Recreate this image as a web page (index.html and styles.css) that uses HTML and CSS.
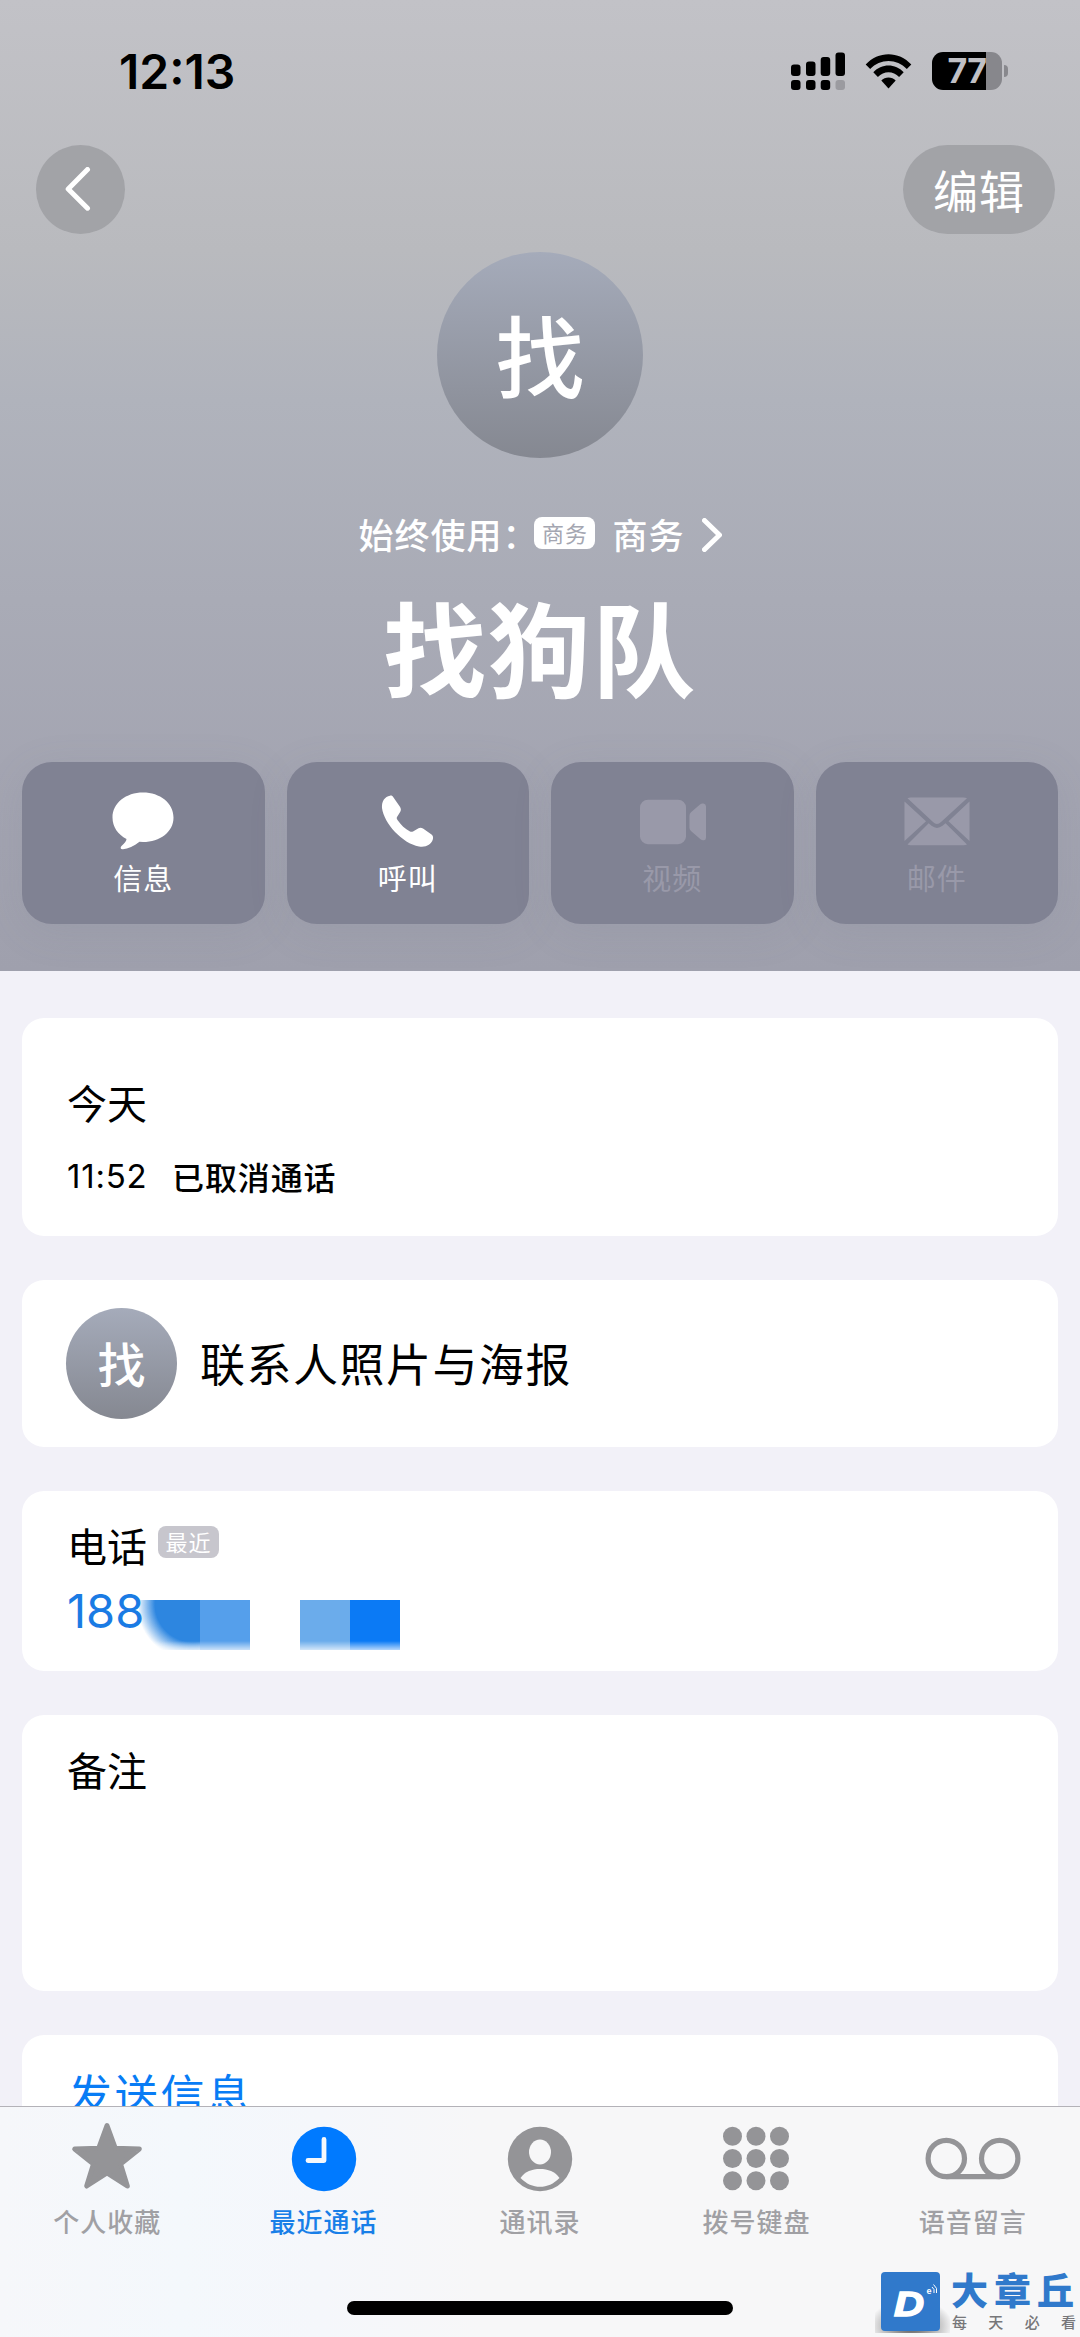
FILE: index.html
```html
<!DOCTYPE html>
<html lang="zh-CN">
<head>
<meta charset="utf-8">
<title>找狗队</title>
<link rel="stylesheet" href="styles.css">
</head>
<body>
<div class="screen">
  <header class="hero">
    <div class="status">
      <span class="clock">12:13</span>
      <div class="indicators">
        <svg class="signal" width="54" height="38" viewBox="0 0 54 38">
          <rect x="0" y="12.5" width="9.5" height="11.5" rx="3"/><rect x="15" y="9.5" width="9.5" height="14.5" rx="3"/><rect x="29.7" y="5" width="9.5" height="19" rx="3"/><rect x="44.5" y="0.5" width="9.5" height="23.5" rx="3"/>
          <rect x="0" y="28" width="9.5" height="10" rx="3"/><rect x="15" y="28" width="9.5" height="10" rx="3"/><rect x="29.7" y="28" width="9.5" height="10" rx="3"/><rect x="44.5" y="28" width="9.5" height="10" rx="3" fill="#9b9ba0"/>
        </svg>
        <svg class="wifi" width="47" height="38" viewBox="0 0 47 38">
          <path d="M0.7 12.5C13 -1.3 34 -1.3 46.3 12.5L41.8 17C32 6.200 15 6.200 5.200 17Z"/>
          <path d="M8.300 20.300C16.500 11.300 30.500 11.300 38.700 20.300L34.100 25C28.300 18.700 18.700 18.700 12.900 25Z"/>
          <path d="M16.300 28.500C20 24.600 27 24.600 30.700 28.500L23.500 36.500Z"/>
        </svg>
        <div class="battery"><span>77</span></div>
        <i class="nub"></i>
      </div>
    </div>
    <nav class="nav">
      <button class="back"><svg width="26" height="46" viewBox="0 0 26 46"><path d="M22.500 2.500L3.200 21.900L22.500 41.200"/></svg></button>
      <button class="edit">编辑</button>
    </nav>
    <div class="avatar">找</div>
    <div class="line">
      <span class="always">始终使用：</span><span class="chip white">商务</span><span class="sim">商务</span>
      <svg width="20" height="34" viewBox="0 0 20 34"><path d="M2.500 2.500L17.500 17L2.500 31.500"/></svg>
    </div>
    <h1>找狗队</h1>
    <div class="actions">
      <button class="tile">
        <svg width="70" height="64" viewBox="0 0 70 64"><path d="M35 4.500C52 4.500 65.500 15 65.500 29.500S52 54 35 54L31.500 53.700C26 58 20 60.600 15 61.200C12.500 61.500 12 59.500 13.500 58C16.500 55 18.500 53 18.500 51C10 46.500 4.500 39 4.500 29.500C4.500 15 18 4.500 35 4.500Z"/></svg>
        <span>信息</span>
      </button>
      <button class="tile">
        <svg width="70" height="64" viewBox="1.500 0 70 64"><path d="M10.500 20C10 13 13.500 8.500 18.500 7.700C20 7.400 21 8 22 9.400L28.600 19C29.700 21 29.600 22.500 28.500 24.300L25.500 29C25 30 25.200 30.700 26 32C29.500 37 33.500 41 38.500 43.500C39.500 44 40.500 44 41.500 43.400L47 40.200C48.500 39.400 50 39.500 51.500 40.600L59.700 46.300C61.500 47.600 62 49.300 61.300 51.600C59.500 57 54.500 59.500 47.500 58.500C31 55.500 12.500 35.500 10.500 20Z"/></svg>
        <span>呼叫</span>
      </button>
      <button class="tile off">
        <svg width="74" height="64" viewBox="0 0 74 64"><rect x="5" y="11.700" width="46" height="44.500" rx="8"/><path d="M54.500 27.500Q54.500 25.500 56 24.200L65 16.400Q66.500 15.200 68.500 15.500Q71 16 71 18.500V49.500Q71 52 69 52.200Q67 52.500 65.500 51.200L56 43Q54.500 41.700 54.500 40Z"/></svg>
        <span>视频</span>
      </button>
      <button class="tile off">
        <svg width="70" height="64" viewBox="0 0 70 64"><path d="M5.500 10.300Q7 9.500 8.500 9.500H61.500Q63.500 9.500 65 10.300L39 34Q35 37.800 31 34ZM2.500 13.500L24 33.200L2.500 53ZM67.500 13.500V53L46.500 33.200ZM26.700 35.200L29.500 37.800Q35 42 40.500 37.800L43.500 35.200L65 56.500Q63.500 57.300 61.500 57.300H8.500Q7 57.300 5.500 56.500Z"/></svg>
        <span>邮件</span>
      </button>
    </div>
  </header>

  <main class="cards">
    <section class="card today">
      <h2>今天</h2>
      <p><time>11:52</time><b>已取消通话</b></p>
    </section>
    <section class="card poster"><div class="avatar small">找</div><span>联系人照片与海报</span></section>
    <section class="card phone">
      <div class="label">电话<span class="chip gray">最近</span></div>
      <div class="number"><span>188</span><div class="mask"><i class="m1"></i><i class="m2"></i><i class="m3"></i><i class="m4"></i></div></div>
    </section>
    <section class="card notes">备注</section>
    <section class="card send">发送信息</section>
  </main>

  <footer class="tabbar">
    <div class="tabs">
      <a class="tab">
        <svg width="96" height="76" viewBox="0 0 96 76"><path d="M48 8.500L56.300 31.300L80.300 32L61.500 47L68.300 69L48 56L27.700 69L34.500 47L15.700 32L39.700 31.300Z" stroke="currentColor" stroke-width="5" stroke-linejoin="round"/></svg>
        <span>个人收藏</span>
      </a>
      <a class="tab on">
        <svg width="96" height="76" viewBox="0 0 96 76"><circle cx="48" cy="42" r="32.200"/><path d="M48 22.500V43.500H32" fill="none" stroke="#f5f8fc" stroke-width="4.800" stroke-linecap="round" stroke-linejoin="round"/></svg>
        <span>最近通话</span>
      </a>
      <a class="tab">
        <svg width="96" height="76" viewBox="0 0 96 76"><circle cx="48" cy="42" r="32.200"/><ellipse cx="48" cy="35" rx="11" ry="12.500" fill="#f7f7f8"/><path d="M28.500 61C33 54.500 40 52 48 52S63 54.500 67.500 61C56 72.800 40 72.800 28.500 61Z" fill="#f7f7f8"/></svg>
        <span>通讯录</span>
      </a>
      <a class="tab">
        <svg width="96" height="76" viewBox="0 0 96 76"><g><circle cx="24.500" cy="19.300" r="9.500"/><circle cx="48" cy="19.300" r="9.500"/><circle cx="71.500" cy="19.300" r="9.500"/><circle cx="24.500" cy="41.500" r="9.500"/><circle cx="48" cy="41.500" r="9.500"/><circle cx="71.500" cy="41.500" r="9.500"/><circle cx="24.500" cy="63.700" r="9.500"/><circle cx="48" cy="63.700" r="9.500"/><circle cx="71.500" cy="63.700" r="9.500"/></g></svg>
        <span>拨号键盘</span>
      </a>
      <a class="tab">
        <svg width="96" height="76" viewBox="0 0 96 76"><g fill="none" stroke="currentColor" stroke-width="5.200"><circle cx="21.300" cy="41.500" r="18.200"/><circle cx="74.700" cy="41.500" r="18.200"/><path d="M21.300 59.700H74.700"/></g></svg>
        <span>语音留言</span>
      </a>
    </div>
    <div class="home"></div>
    <div class="watermark">
      <svg width="75" height="62" viewBox="0 0 75 62">
        <defs><radialGradient id="shade"><stop offset="0" stop-color="#555"/><stop offset="1" stop-color="#555" stop-opacity="0"/></radialGradient></defs>
        <ellipse cx="36" cy="55" rx="42" ry="27" fill="url(#shade)"/>
        <rect x="6" y="1" width="59" height="59" rx="4" fill="#3079cb"/>
        <text x="19" y="45" class="logo-d" textLength="30" lengthAdjust="spacingAndGlyphs">D</text>
        <text x="51.500" y="23" class="logo-e">e</text>
        <path d="M57 16Q60 18 59 22M58.500 13.500Q63 17 61.500 22" fill="none" stroke="#fff" stroke-width="1"/>
      </svg>
      <div class="brand"><strong>大章丘</strong><small><span>每</span><span>天</span><span>必</span><span>看</span></small></div>
    </div>
  </footer>
</div>
</body>
</html>
```
FILE: styles.css
```css
* { box-sizing: border-box; margin: 0; padding: 0; }
body { width: 1080px; height: 2337px; overflow: hidden; font-family: "Noto Sans CJK SC", sans-serif; background: #f2f1f8; color: #000; }
button { border: 0; font: inherit; color: #fff; }
svg { display: block; fill: currentColor; }
.screen { display: flex; flex-direction: column; height: 2337px; }

.hero { height: 971px; flex: none; display: flex; flex-direction: column; align-items: center; color: #fff;
  background: linear-gradient(#c2c2c7 0, #b9babe 250px, #b0b3bc 400px, #a9abb6 600px, #a3a4b1 800px, #9fa0ad 971px); }
.status { width: 100%; height: 145px; padding: 52px 72px 0 119px; display: flex; justify-content: space-between; color: #000; }
.clock { font: 600 48px/40px Inter, sans-serif; letter-spacing: 0; }
.indicators { display: flex; height: 38px; align-items: center; }
.wifi { margin: 0 20px 0 20px; }
.battery { width: 70px; height: 38px; border-radius: 11px; background: linear-gradient(90deg, #000 54px, #87878c 54px); color: #c0c0c5; font: 700 34px/38px Inter, sans-serif; letter-spacing: -.5px; text-align: center; }
.nub { width: 4px; height: 12px; margin-left: 2px; border-radius: 0 6px 6px 0; background: #88888d; }

.nav { width: 100%; height: 107px; padding: 0 25px 0 36px; display: flex; justify-content: space-between; }
.nav button { height: 89px; border-radius: 45px; background: #a2a3a7; }
.back { width: 89px; padding-left: 29px; }
.back svg, .line svg { fill: none; stroke: #fff; stroke-width: 5; stroke-linecap: round; stroke-linejoin: round; }
.nav .edit { width: 152px; font-size: 45px; line-height: 89px; letter-spacing: 1px; }

.avatar { width: 206px; height: 206px; flex: none; border-radius: 50%; background: linear-gradient(#a5abba, #858891); color: #fff; font-weight: 500; font-size: 89px; line-height: 201px; text-align: center; }
.line { display: flex; align-items: center; height: 36px; margin-top: 59px; font-size: 35px; font-weight: 500; line-height: 52px; letter-spacing: 1px; }
.always { width: 180px; margin: -3px -4px 0 0; white-space: nowrap; }
.chip { font-size: 22px; font-weight: 400; line-height: 30px; letter-spacing: 1px; width: 61px; height: 32px; border-radius: 8px; text-align: center; }
.chip.white { background: #fff; color: #a4a6b1; margin-top: -4px; }
.sim { margin: -3px 17px 0 17px; }
h1 { font-size: 103px; line-height: 130px; font-weight: 700; letter-spacing: 1.500px; margin-top: 28px; }
.actions { width: 1036px; height: 162px; margin-top: 51px; display: grid; grid-template-columns: repeat(4, 1fr); gap: 22px; }
.tile { display: flex; flex-direction: column; align-items: center; border-radius: 30px; background: #808293; padding-top: 26px; font-size: 29px; line-height: 40px; letter-spacing: 1px; box-shadow: 0 8px 40px rgba(110, 112, 135, .12); }
.tile span { margin-top: 5px; }
.tile.off { color: #9999a9; }

.cards { flex: 1; min-height: 0; overflow: hidden; padding: 47px 22px 0; display: flex; flex-direction: column; gap: 44px; }
.card { flex: none; background: #fff; border-radius: 22px; padding: 0 45px; }
.today { height: 218px; padding-top: 56px; }
.today h2 { font-size: 40px; font-weight: 400; line-height: 56px; }
.today p { display: flex; align-items: center; height: 40px; margin-top: 26px; }
time { width: 105px; font: 33px/40px Inter, sans-serif; letter-spacing: .8px; }
.today b { font-size: 32px; font-weight: 500; line-height: 36px; letter-spacing: .9px; margin-top: -1px; }
.poster { height: 167px; display: flex; align-items: center; font-size: 45px; letter-spacing: 1.500px; }
.poster .avatar { margin-left: -1px; }
.poster span { margin: -2px 0 0 23px; }
.avatar.small { width: 111px; height: 111px; font-size: 48px; line-height: 108px; letter-spacing: 0; }
.phone { height: 180px; padding-top: 28px; }
.label { display: flex; height: 56px; font-size: 40px; line-height: 52px; }
.chip.gray { margin: 7px 0 0 11px; background: #c7c6cd; color: #fff; }
.number { display: flex; color: #1a7be4; font: 47px/56px Inter, sans-serif; letter-spacing: 0; padding-top: 8px; }
.number span { width: 72px; }
.mask { display: flex; margin-top: 17px; width: 261px; height: 50px; -webkit-mask-image: linear-gradient(#000 82%, rgba(0,0,0,.3)); mask-image: linear-gradient(#000 82%, rgba(0,0,0,.3)); }
.mask i { width: 50px; }
.mask .m1 { width: 61px; background: radial-gradient(circle at 54px 4px, #2d86e0 38px, rgba(45,134,224,0) 56px); }
.m2 { background: #559feb; }
.m3 { background: #6baceb; margin-left: 50px; }
.m4 { background: #0b7af5; }
.notes { height: 276px; padding-top: 26px; font-size: 40px; line-height: 56px; }
.send { height: 180px; padding: 28px 46px; font-size: 44px; line-height: 60px; letter-spacing: 2.200px; color: #087cf5; }

.tabbar { position: relative; height: 231px; flex: none; border-top: 1px solid #b3b2b8; background: linear-gradient(90deg, #f6f7fa 0, #f4f8fc 180px, #f5f7fb 320px, #f7f7f8 480px, #f7f7f8); display: flex; flex-direction: column; align-items: center; }
.tabs { width: 1082px; display: grid; grid-template-columns: repeat(5, 1fr); padding-top: 10px; }
.tab { display: flex; flex-direction: column; align-items: center; color: #949497; }
.tab span { font-size: 26px; line-height: 36px; letter-spacing: 1px; margin-top: 10px; color: #a0a0a4; font-weight: 500; }
.tab.on { color: #007aff; }
.tab.on span { color: #187fe8; }
.home { width: 386px; height: 14px; margin-top: 62px; border-radius: 7px; background: #000; }
.watermark { position: absolute; left: 875px; top: 164px; display: flex; width: 205px; }
.watermark svg { overflow: hidden; flex: none; }
.logo-d { font: italic 700 35px "Liberation Sans", sans-serif; fill: #fff; stroke: #fff; stroke-width: 1.500px; }
.logo-e { font: 700 9px "Liberation Sans", sans-serif; fill: #fff; }
.brand { width: 127px; margin-left: 1px; color: #3079cb; }
.brand strong { display: block; font-size: 37px; line-height: 36px; font-weight: 900; letter-spacing: 6px; white-space: nowrap; }
.brand small { display: flex; justify-content: space-between; padding: 7px 2px 0 1px; color: #77777a; font-size: 15px; line-height: 16px; font-weight: 500; }
```
